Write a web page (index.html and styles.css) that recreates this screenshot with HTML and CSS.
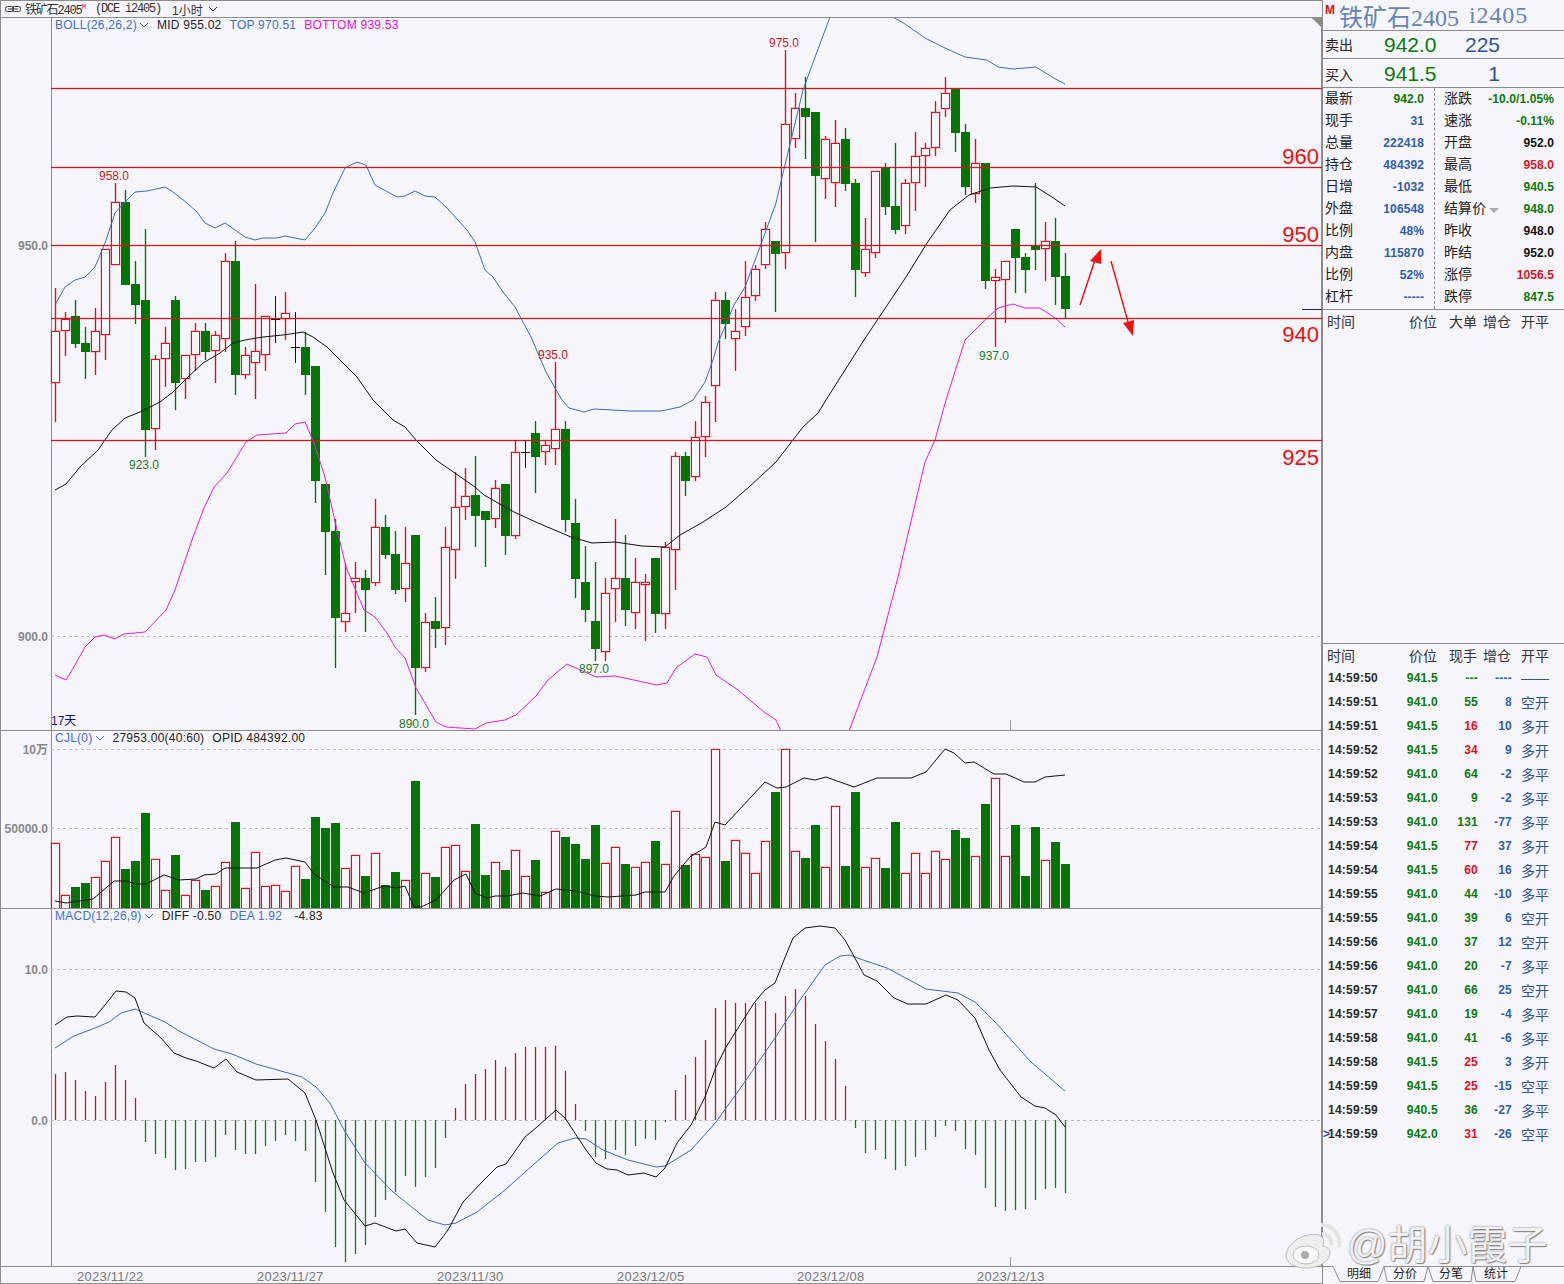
FILE: index.html
```html
<!DOCTYPE html>
<html lang="zh-CN">
<head>
  <meta charset="UTF-8" />
  <title>铁矿石2405</title>
  <link rel="stylesheet" href="styles.css">
</head>
<body>
  <div class="terminal">
    <div class="chart-col">
      <div class="title-bar">
        <svg class="link-icon" width="16" height="8" viewBox="0 0 16 8"><rect x="0.5" y="1.5" width="8" height="5" rx="2" /><rect x="7.5" y="1.5" width="8" height="5" rx="2" /><line x1="3" y1="4" x2="13" y2="4" /></svg>
        <span class="title-name">铁矿石2405<sup>M</sup></span>
        <span class="title-code">(DCE i2405)</span>
        <span class="title-period">1小时</span>
        <svg class="chev chev-black" width="10" height="6" viewBox="0 0 10 6"><polyline points="1,1 5,5 9,1" /></svg>
      </div>

      <div class="pane pane-main">
        <svg id="mainChart" width="1322" height="712" viewBox="0 18 1322 712"></svg>
        <div class="legend">
          <span class="blue">BOLL(26,26,2)<svg class="chev" width="10" height="6" viewBox="0 0 10 6"><polyline points="1,1 5,5 9,1" /></svg></span>
          <span>MID 955.02</span>
          <span class="blue">TOP 970.51</span>
          <span class="magenta">BOTTOM 939.53</span>
        </div>
      </div>

      <div class="pane pane-vol">
        <svg id="volChart" width="1322" height="177" viewBox="0 731 1322 177"></svg>
        <div class="legend">
          <span class="blue">CJL(0)<svg class="chev" width="10" height="6" viewBox="0 0 10 6"><polyline points="1,1 5,5 9,1" /></svg></span>
          <span>27953.00(40:60)</span>
          <span>OPID 484392.00</span>
        </div>
      </div>

      <div class="pane pane-macd">
        <svg id="macdChart" width="1322" height="357" viewBox="0 909 1322 357"></svg>
        <div class="legend">
          <span class="blue">MACD(12,26,9)<svg class="chev" width="10" height="6" viewBox="0 0 10 6"><polyline points="1,1 5,5 9,1" /></svg></span>
          <span>DIFF -0.50</span>
          <span class="blue">DEA 1.92</span>
          <span class="macd-val">-4.83</span>
        </div>
      </div>

      <div class="date-axis">
        <span>2023/11/22</span>
        <span>2023/11/27</span>
        <span>2023/11/30</span>
        <span>2023/12/05</span>
        <span>2023/12/08</span>
        <span>2023/12/13</span>
      </div>
    </div>

    <aside class="quote-panel">
      <div class="quote-title"><b>M</b><span>铁矿石2405</span><span class="quote-code">i2405</span></div>

      <div class="book-row book-sell"><label>卖出</label><span class="book-price">942.0</span><span class="book-size">225</span></div>
      <div class="book-row book-buy"><label>买入</label><span class="book-price">941.5</span><span class="book-size">1</span></div>

      <div class="details">
        <div class="detail-col">
          <div class="detail-row"><label>最新</label><span class="down">942.0</span></div>
          <div class="detail-row"><label>现手</label><span class="navy">31</span></div>
          <div class="detail-row"><label>总量</label><span class="navy">222418</span></div>
          <div class="detail-row"><label>持仓</label><span class="navy">484392</span></div>
          <div class="detail-row"><label>日增</label><span class="navy">-1032</span></div>
          <div class="detail-row"><label>外盘</label><span class="navy">106548</span></div>
          <div class="detail-row"><label>比例</label><span class="navy">48%</span></div>
          <div class="detail-row"><label>内盘</label><span class="navy">115870</span></div>
          <div class="detail-row"><label>比例</label><span class="navy">52%</span></div>
          <div class="detail-row"><label>杠杆</label><span class="navy">-----</span></div>
        </div>
        <div class="detail-col detail-right">
          <div class="detail-row"><label>涨跌</label><span class="down">-10.0/1.05%</span></div>
          <div class="detail-row"><label>速涨</label><span class="down">-0.11%</span></div>
          <div class="detail-row"><label>开盘</label><span class="ink">952.0</span></div>
          <div class="detail-row"><label>最高</label><span class="up">958.0</span></div>
          <div class="detail-row"><label>最低</label><span class="down">940.5</span></div>
          <div class="detail-row"><label>结算价<i class="caret"></i></label><span class="down">948.0</span></div>
          <div class="detail-row"><label>昨收</label><span class="ink">948.0</span></div>
          <div class="detail-row"><label>昨结</label><span class="ink">952.0</span></div>
          <div class="detail-row"><label>涨停</label><span class="up">1056.5</span></div>
          <div class="detail-row"><label>跌停</label><span class="down">847.5</span></div>
        </div>
      </div>

      <div class="trade-head"><span>时间</span><span>价位</span><span>大单</span><span>增仓</span><span>开平</span></div>
      <div class="big-orders"></div>

      <div class="trade-head"><span>时间</span><span>价位</span><span>现手</span><span>增仓</span><span>开平</span></div>
      <div class="trades">
        <div class="trade"><span>14:59:50</span><span class="down">941.5</span><span class="down">---</span><span class="navy">----</span><em>——</em></div>
        <div class="trade"><span>14:59:51</span><span class="down">941.0</span><span class="down">55</span><span class="navy">8</span><em>空开</em></div>
        <div class="trade"><span>14:59:51</span><span class="down">941.5</span><span class="up">16</span><span class="navy">10</span><em>多开</em></div>
        <div class="trade"><span>14:59:52</span><span class="down">941.5</span><span class="up">34</span><span class="navy">9</span><em>多开</em></div>
        <div class="trade"><span>14:59:52</span><span class="down">941.0</span><span class="down">64</span><span class="navy">-2</span><em>多平</em></div>
        <div class="trade"><span>14:59:53</span><span class="down">941.0</span><span class="down">9</span><span class="navy">-2</span><em>多平</em></div>
        <div class="trade"><span>14:59:53</span><span class="down">941.0</span><span class="down">131</span><span class="navy">-77</span><em>多平</em></div>
        <div class="trade"><span>14:59:54</span><span class="down">941.5</span><span class="up">77</span><span class="navy">37</span><em>多开</em></div>
        <div class="trade"><span>14:59:54</span><span class="down">941.5</span><span class="up">60</span><span class="navy">16</span><em>多开</em></div>
        <div class="trade"><span>14:59:55</span><span class="down">941.0</span><span class="down">44</span><span class="navy">-10</span><em>多平</em></div>
        <div class="trade"><span>14:59:55</span><span class="down">941.0</span><span class="down">39</span><span class="navy">6</span><em>空开</em></div>
        <div class="trade"><span>14:59:56</span><span class="down">941.0</span><span class="down">37</span><span class="navy">12</span><em>空开</em></div>
        <div class="trade"><span>14:59:56</span><span class="down">941.0</span><span class="down">20</span><span class="navy">-7</span><em>多平</em></div>
        <div class="trade"><span>14:59:57</span><span class="down">941.0</span><span class="down">66</span><span class="navy">25</span><em>空开</em></div>
        <div class="trade"><span>14:59:57</span><span class="down">941.0</span><span class="down">19</span><span class="navy">-4</span><em>多平</em></div>
        <div class="trade"><span>14:59:58</span><span class="down">941.0</span><span class="down">41</span><span class="navy">-6</span><em>多平</em></div>
        <div class="trade"><span>14:59:58</span><span class="down">941.5</span><span class="up">25</span><span class="navy">3</span><em>多开</em></div>
        <div class="trade"><span>14:59:59</span><span class="down">941.5</span><span class="up">25</span><span class="navy">-15</span><em>空平</em></div>
        <div class="trade"><span>14:59:59</span><span class="down">940.5</span><span class="down">36</span><span class="navy">-27</span><em>多平</em></div>
        <div class="trade trade-current"><span>14:59:59</span><span class="down">942.0</span><span class="up">31</span><span class="navy">-26</span><em>空平</em></div>
      </div>

      <svg class="tab-strip" width="242" height="18" viewBox="0 0 242 18">
        <polyline points="0,0.5 10,0.5 17,15.5 55,15.5 61,0.5 242,0.5" />
        <polyline points="61,0.5 64,15.5 101,15.5 105,0.5" />
        <polyline points="105,0.5 110,15.5 148,15.5 150,0.5" />
        <polyline points="150,0.5 153,15.5 192,15.5 198,0.5" />
        <text x="36" y="12">明细</text>
        <text x="82" y="12">分价</text>
        <text x="128" y="12">分笔</text>
        <text x="173" y="12">统计</text>
      </svg>
    </aside>

    <div class="watermark">
      <svg width="58" height="48" viewBox="0 0 58 48">
        <path class="wb-body" d="M23 14c-11 2-22 11-22 21 0 7 9 12 20 12 13 0 24-7 24-15 0-4-3-6-7-7 1-4 1-8-2-10-3-2-8-2-13-1z" />
        <ellipse class="wb-inner" cx="21" cy="34" rx="13" ry="9" />
        <circle class="wb-eye" cx="20" cy="34" r="4" />
        <path class="wb-arc" d="M36 4a18 18 0 0 1 18 22" />
        <path class="wb-arc" d="M37 13a9 9 0 0 1 9 11" />
      </svg>
      <span>@胡小霞子</span>
    </div>
  </div>

  <script src="chart.js"></script>
</body>
</html>
```

FILE: styles.css
```css
* {
  box-sizing: border-box;
}
html, body {
  margin: 0;
  padding: 0;
}
body {
  background-color: #f5f5fb;
  color: #222222;
  font-family: "Liberation Sans", "Noto Sans CJK SC", sans-serif;
  font-size: 12px;
}
.terminal {
  position: relative;
  display: flex;
  width: 1564px;
  height: 1284px;
  overflow: hidden;
}

/* left side: title + three chart panes */
.chart-col {
  width: 1322px;
  height: 1284px;
  flex: none;
}
.title-bar {
  display: flex;
  align-items: center;
  height: 18px;
  padding-left: 4px;
  border-top: 1px solid #8c8c8c;
  border-left: 1px solid #8c8c8c;
  border-bottom: 1px solid #8c8c8c;
  font-family: "Liberation Sans", "Noto Sans CJK SC", sans-serif;
  color: #333333;
}
.link-icon {
  fill: none;
  stroke: #333333;
  margin-right: 4px;
}
.title-name {
  font-family: "Liberation Mono", "Noto Sans CJK SC", monospace;
  font-size: 12px;
  letter-spacing: -1.2px;
  width: 70px;
  white-space: nowrap;
}
.title-name sup {
  color: #e04040;
  font-size: 8px;
  line-height: 0;
}
.title-code {
  font-family: "Liberation Mono", monospace;
  font-size: 12px;
  letter-spacing: -1.2px;
  width: 77px;
  white-space: nowrap;
}
.title-period {
  margin-right: 3px;
}
.chev {
  fill: none;
  stroke: #2f5fc0;
  margin-left: 2px;
}
.chev-black {
  stroke: #222222;
}
.pane {
  position: relative;
  border-bottom: 1px solid #8c8c8c;
}
.pane > svg {
  display: block;
}
.pane-main {
  height: 713px;
}
.pane-vol {
  height: 178px;
}
.pane-macd {
  height: 358px;
}
.legend {
  position: absolute;
  top: 0;
  left: 55px;
  display: flex;
  gap: 8px;
  height: 15px;
  line-height: 15px;
  white-space: nowrap;
  font-size: 12px;
  letter-spacing: 0.25px;
}
.legend .chev {
  position: relative;
  top: -1px;
}
.legend .macd-val {
  margin-left: 4px;
}
.blue {
  color: #3f6fd0;
}
.magenta {
  color: #e010e0;
}
.date-axis {
  display: flex;
  height: 17px;
  padding-left: 20px;
  border-left: 1px solid #8c8c8c;
  border-bottom: 1px solid #8c8c8c;
  color: #777777;
  font-size: 13px;
  letter-spacing: 0.25px;
  line-height: 19px;
}
.date-axis span {
  width: 180px;
  padding-left: 56px;
}

/* right side: quote panel */
.quote-panel {
  display: flex;
  flex-direction: column;
  width: 242px;
  height: 1284px;
  flex: none;
  border-left: 1px solid #8c8c8c;
}
.quote-title {
  display: flex;
  align-items: center;
  gap: 4px;
  height: 31px;
  padding-left: 2px;
  border-bottom: 1px solid #8c8c8c;
  font-family: "Liberation Serif", "Noto Sans CJK SC", serif;
  font-size: 24px;
  color: #6486b4;
  white-space: pre;
}
.quote-title b {
  align-self: flex-start;
  margin-top: 3px;
  font-family: "Liberation Sans", sans-serif;
  font-size: 12px;
  color: #e01010;
}
.quote-title .quote-code {
  margin-left: 6px;
  letter-spacing: 0.9px;
}
.book-row {
  display: flex;
  align-items: center;
  padding-left: 2px;
  border-bottom: 1px solid #8c8c8c;
  font-size: 21px;
}
.book-sell {
  height: 28px;
}
.book-sell label {
  position: relative;
  top: -1px;
}
.book-buy {
  height: 29px;
  padding-top: 2px;
}
.book-row label {
  width: 59px;
  font-size: 14px;
}
.book-price {
  width: 50px;
  color: #0a7a0a;
}
.book-size {
  width: 66px;
  text-align: right;
  color: #2f5596;
}
.details {
  display: flex;
  height: 222px;
  border-bottom: 1px solid #8c8c8c;
}
.detail-col {
  width: 111px;
  padding: 0 10px 0 2px;
}
.detail-right {
  width: 130px;
  padding-left: 9px;
  border-left: 1px dashed #8c8c8c;
}
.detail-row {
  display: flex;
  justify-content: space-between;
  align-items: center;
  height: 22px;
  font-weight: bold;
  letter-spacing: 0.1px;
}
.detail-row label {
  position: relative;
  top: -2px;
  font-size: 14px;
  font-weight: normal;
}
.caret {
  display: inline-block;
  margin-left: 3px;
  border-top: 5px solid #aaaaaa;
  border-left: 5px solid transparent;
  border-right: 5px solid transparent;
}
.up {
  color: #e01020;
}
.down {
  color: #0a7a0a;
}
.navy {
  color: #2f5fa8;
}
.ink {
  color: #111111;
}
.trade-head, .trade {
  display: grid;
  grid-template-columns: 70px 40px 40px 34px 38px;
  padding-left: 4px;
  align-items: center;
  text-align: right;
}
.trade-head {
  height: 22px;
  font-size: 14px;
  color: #333333;
}
.trade-head span:first-child, .trade span:first-child {
  text-align: left;
}
.big-orders {
  height: 312px;
  border-bottom: 1px solid #8c8c8c;
}
.trades {
  flex: 1;
}
.trade {
  position: relative;
  height: 24px;
  padding-left: 5px;
  grid-template-columns: 70px 40px 40px 34px 37px;
  font-weight: bold;
  letter-spacing: 0.25px;
}
.trade span:first-child {
  color: #2a2a2a;
}
.trade em {
  font-style: normal;
  font-weight: normal;
  font-size: 14px;
  letter-spacing: 0;
  color: #2f5596;
}
.trade-current::before {
  content: ">";
  position: absolute;
  left: 0;
  color: #2f5596;
}
.tab-strip {
  flex: none;
  fill: none;
}
.tab-strip polyline {
  stroke: #8c8c8c;
}
.tab-strip text {
  fill: #222222;
  stroke: none;
  font-size: 12px;
  text-anchor: middle;
}

/* repost mark lying over the corner */
.watermark {
  position: absolute;
  left: 1285px;
  top: 1221px;
  display: flex;
  align-items: center;
  gap: 4px;
  color: #f0f0f2;
  font-family: "Liberation Sans", "Noto Sans CJK SC", sans-serif;
  font-size: 40px;
  line-height: 48px;
  text-shadow: 0 0 2px #777777, 1px 1px 1px #888888;
  white-space: nowrap;
}
.wb-body {
  fill: #eeeeee;
  stroke: #bbbbbb;
}
.wb-inner {
  fill: #f8f8f8;
  stroke: #bbbbbb;
}
.wb-eye {
  fill: #aaaaaa;
}
.wb-arc {
  fill: none;
  stroke: #e4e4e4;
  stroke-width: 4;
}

/* chart pieces, drawn by chart.js */
.axis-line {
  stroke: #8c8c8c;
}
.grid-line {
  stroke: #bbbbbb;
  stroke-dasharray: 3 3;
}
.level-line {
  stroke: #cc1a1a;
}
.level-halo {
  stroke: #cc1a1a;
  stroke-opacity: 0.15;
  stroke-width: 3;
}
.axis-label {
  fill: #888888;
  font-weight: bold;
  font-size: 12px;
  text-anchor: end;
}
.price-tag {
  fill: #e81010;
  font-size: 22px;
  text-anchor: end;
}
.mark-red, .mark-green {
  font-size: 12px;
  text-anchor: middle;
}
.mark-red {
  fill: #d01818;
}
.mark-green {
  fill: #1a7a2a;
}
.days-label {
  fill: #101080;
  font-size: 12px;
}
.line-top, .line-dea {
  fill: none;
  stroke: #3a6cc0;
}
.line-mid, .line-diff, .line-vol {
  fill: none;
  stroke: #111111;
}
.line-bottom {
  fill: none;
  stroke: #e020d8;
}
.arrow-line {
  stroke: #f01010;
  stroke-width: 1.4;
}
.arrow-head {
  fill: #f01010;
}
.corner {
  fill: #8c8c8c;
}
```

FILE: chart.js
```javascript
const RED = '#dc1018';
const GREEN = '#067306';
const BG = '#f5f5fb';

// color, high, body top, body bottom, low (all in page px). i-th candle sits at x = 55 + 10 * i
const candles = [
  ['r',288,331,383,422],['r',312,319,331,356],['g',300,316,344,348],['g',327,343,352,379],['r',308,331,352,375],
  ['r',249,249,335,360],['r',183,202,265,265],['g',190,202,285,285],['g',261,284,305,324],['g',229,300,430,457],
  ['r',355,359,429,450],['r',327,343,359,387],['g',296,300,383,410],['r',355,355,379,399],['r',323,331,355,371],
  ['g',323,331,352,360],['r',331,335,351,383],['r',253,261,339,352],['g',241,261,375,395],['r',347,355,375,379],
  ['r',284,351,363,399],['r',316,316,355,371],['k',296,319,319,343],['r',292,313,319,340],['k',312,347,347,363],
  ['g',332,347,375,395],['g',366,366,481,503],['g',484,484,532,575],['g',519,531,618,668],['r',563,613,622,632],
  ['r',562,578,582,613],['g',570,578,590,632],['r',499,527,583,586],['g',515,527,555,559],['g',531,554,590,594],
  ['r',527,563,589,602],['g',535,535,668,715],['r',613,622,668,672],['g',597,621,629,648],['r',527,547,628,645],
  ['r',472,507,550,579],['r',468,496,507,520],['g',456,495,516,547],['g',511,511,520,567],['r',480,488,519,528],
  ['g',484,484,536,555],['r',440,452,536,539],['k',440,452,452,468],['g',421,433,457,493],['r',440,445,452,465],
  ['r',362,429,449,465],['g',421,429,520,532],['g',499,523,579,598],['g',546,582,610,622],['g',562,621,649,661],
  ['r',578,593,652,661],['r',519,578,589,622],['g',535,578,610,626],['r',558,582,613,629],['r',574,582,585,641],
  ['g',558,558,614,633],['r',542,547,614,629],['r',452,456,550,590],['g',452,456,481,496],['r',421,437,477,481],
  ['r',396,402,437,457],['r',292,300,386,422],['g',292,300,324,339],['r',309,331,339,371],['r',261,297,327,336],
  ['r',265,269,296,301],['r',222,229,265,269],['g',241,241,254,312],['r',50,124,253,269],['r',93,108,139,148],
  ['g',77,108,117,159],['g',112,112,176,242],['r',136,139,179,199],['r',120,143,183,207],['g',128,139,184,191],
  ['g',179,183,270,297],['r',218,249,273,277],['r',171,171,253,258],['g',163,168,207,215],['g',143,206,230,234],
  ['r',179,183,226,234],['r',132,156,183,211],['r',143,148,156,187],['r',101,112,148,156],['r',77,93,109,117],
  ['g',89,89,133,152],['g',124,132,187,195],['r',139,163,194,203],['g',163,163,281,289],['r',269,277,281,347],
  ['r',261,261,280,323],['g',229,229,258,293],['g',253,257,270,293],['g',183,246,250,270],['r',222,241,249,281],
  ['g',218,241,277,305],['g',253,276,309,319]
];

// volume bar tops, baseline is y = 908. bar color follows listing
const volumes = [
  ['r',843],['r',895],['g',887],['g',883],['r',877],['r',861],['r',837],['g',869],['g',861],['g',813],
  ['r',859],['r',890],['g',855],['r',895],['r',880],['g',890],['r',886],['r',862],['g',822],['r',888],
  ['r',852],['r',886],['r',885],['r',891],['r',866],['g',879],['g',817],['g',828],['g',823],['r',868],
  ['r',855],['g',876],['r',853],['g',885],['g',872],['r',880],['g',781],['r',873],['g',877],['r',847],
  ['r',845],['r',871],['g',824],['g',875],['r',862],['g',870],['r',850],['r',876],['g',860],['r',892],
  ['r',831],['g',837],['g',844],['g',859],['g',825],['r',863],['r',847],['g',864],['r',867],['r',862],
  ['g',841],['r',864],['r',811],['g',865],['r',854],['r',857],['r',749],['g',861],['r',840],['r',853],
  ['r',873],['r',841],['g',792],['r',749],['r',851],['g',858],['g',825],['r',867],['r',806],['g',866],
  ['g',792],['r',867],['r',858],['g',868],['g',822],['r',873],['r',853],['r',873],['r',851],['r',859],
  ['g',830],['g',838],['r',856],['g',804],['r',778],['r',856],['g',825],['g',876],['g',827],['r',860],
  ['g',842],['g',864]
];

// macd histogram ends, zero is y = 1120
const macdBars = [
  1074,1072,1080,1091,1096,1082,1065,1080,1098,1142,1154,1158,1170,1169,1162,1162,1157,1135,1150,1154,
  1154,1146,1141,1135,1141,1151,1182,1212,1247,1262,1254,1245,1217,1200,1192,1176,1187,1177,1168,1138,
  1108,1084,1074,1069,1060,1067,1053,1047,1047,1047,1046,1071,1104,1131,1157,1159,1150,1155,1146,1139,
  1140,1122,1090,1075,1057,1040,1008,1000,1003,1003,1003,1001,1013,996,989,996,1024,1041,1059,1086,
  1128,1153,1150,1159,1170,1166,1157,1150,1137,1126,1131,1149,1155,1188,1207,1211,1210,1209,1200,1189,
  1188,1193
];

const bollTop = '55,305 65,287 75,280 85,277 95,267 105,243 115,213 125,202 135,192 147,191 165,187 173,192 187,203 197,212 205,223 215,228 225,223 245,237 255,240 263,238 277,238 285,236 305,240 315,228 325,213 333,193 345,168 357,162 366,165 375,185 397,197 405,196 415,191 425,196 435,197 447,208 467,230 475,242 485,270 493,277 503,292 515,307 531,337 546,372 555,388 562,400 569,408 584,412 594,409 630,411 661,411 680,407 693,400 705,382 713,360 718,343 734,305 745,287 760,247 776,203 783,173 793,132 803,90 814,60 830,17 893,17 905,24 925,38 945,48 965,57 987,60 998,67 1013,69 1036,67 1052,77 1065,84';
const bollMid = '55,490 66,484 80,467 98,450 112,430 125,418 140,412 160,402 173,392 187,378 203,363 220,353 233,343 245,340 263,337 283,335 303,332 313,337 327,347 357,377 373,400 393,420 405,427 416,440 436,460 475,487 484,495 514,512 538,523 571,537 592,543 615,542 642,546 665,547 680,535 703,522 726,507 749,487 776,462 803,427 818,413 826,400 864,340 906,277 927,243 950,210 969,195 990,188 1013,186 1036,187 1052,197 1065,206';
const bollBottom = '55,675 66,680 75,665 85,647 95,637 104,635 115,639 124,634 145,632 166,610 175,590 193,537 204,508 214,487 227,473 246,442 257,435 286,433 295,424 305,422 314,443 325,477 334,517 346,567 364,610 375,617 387,633 395,647 405,658 416,688 436,722 446,727 475,729 486,723 505,720 516,715 536,696 548,680 567,664 596,677 615,676 657,685 667,683 676,668 695,654 707,657 716,675 738,690 764,712 776,720 781,731';
const bollBottom2 = '849,731 877,657 898,577 912,517 925,462 935,440 946,400 965,340 983,322 998,308 1013,304 1025,308 1040,308 1055,318 1065,327';
const volLine = '55,901 66,903 93,899 114,881 125,881 136,884 146,884 164,875 179,880 196,879 204,875 216,874 225,868 257,868 275,860 286,858 305,862 314,874 334,887 348,887 364,893 384,886 396,888 405,886 414,907 421,907 436,900 454,880 466,874 475,893 487,898 495,896 507,896 523,893 540,896 547,893 556,889 576,891 595,896 608,897 636,895 645,892 665,892 674,876 690,857 706,847 715,822 725,825 765,782 777,788 786,787 804,778 815,780 826,777 854,787 877,778 911,778 926,772 945,749 954,753 965,763 974,762 994,774 1006,774 1024,782 1035,782 1045,777 1065,775';
const diffLine = '55,1025 67,1017 77,1016 95,1017 105,1005 116,991 126,992 135,998 144,1023 161,1038 174,1053 186,1058 196,1061 214,1068 226,1059 237,1072 256,1080 288,1079 305,1093 316,1120 333,1173 344,1200 365,1226 375,1223 396,1231 405,1229 417,1243 435,1247 448,1230 463,1202 484,1180 497,1167 506,1164 525,1137 537,1127 556,1110 565,1118 586,1150 596,1163 607,1169 617,1170 628,1175 644,1173 656,1177 665,1168 677,1143 691,1125 705,1097 716,1067 726,1047 754,1003 765,990 775,983 784,960 793,938 805,928 820,926 835,928 845,940 856,960 864,975 877,981 894,998 908,1004 926,1004 946,995 958,1000 975,1018 989,1050 1000,1070 1021,1097 1035,1106 1045,1108 1056,1115 1065,1127';
const deaLine = '55,1048 74,1036 95,1028 109,1022 121,1013 135,1009 165,1022 179,1031 214,1049 232,1054 256,1064 281,1071 302,1077 316,1087 330,1103 344,1130 365,1163 393,1192 428,1220 445,1225 456,1223 477,1212 505,1190 533,1165 558,1143 575,1138 586,1139 603,1150 628,1160 656,1167 665,1166 691,1150 716,1122 744,1083 775,1038 800,1000 825,965 840,956 850,955 863,960 887,968 926,989 958,993 975,1002 996,1023 1031,1062 1065,1091';

function line(x1, y1, x2, y2, cls, color) {
  const attr = cls ? `class="${cls}"` : `stroke="${color}"`;
  return `<line x1="${x1}" y1="${y1}" x2="${x2}" y2="${y2}" ${attr} shape-rendering="crispEdges" />`;
}

// the source is a compressed screenshot, thin coloured strokes carry a pale fringe
function softLine(x1, y1, x2, y2, color, fringe) {
  return `<line x1="${x1}" y1="${y1}" x2="${x2}" y2="${y2}" stroke="${color}" stroke-width="3" stroke-opacity="${fringe}" shape-rendering="crispEdges" />` +
    line(x1, y1, x2, y2, null, color);
}

function outlineBar(x, top, bottom) {
  const attrs = `x="${x - 3.5}" y="${top + 0.5}" width="8" height="${bottom - top}" stroke="${RED}" shape-rendering="crispEdges"`;
  return `<rect ${attrs} fill="none" stroke-width="3" stroke-opacity="0.18" />` +
    `<rect ${attrs} fill="${BG}" />`;
}

function text(x, y, cls, value) {
  return `<text x="${x}" y="${y}" class="${cls}">${value}</text>`;
}

function poly(points, cls) {
  return `<polyline points="${points}" class="${cls}" />`;
}

function frame(top, bottom) {
  return line(0.5, top, 0.5, bottom, 'axis-line') + line(51.5, top, 51.5, bottom, 'axis-line') + line(1321.5, top, 1321.5, bottom, 'axis-line');
}

function drawCandle(c, i) {
  const x = 55 + 10 * i;
  const mid = x + 0.5;
  const [color, high, top, bottom, low] = c;
  if (color === 'k') {
    return line(mid, high, mid, low, null, '#111') + line(x - 4, top + 0.5, x + 5, top + 0.5, null, '#111');
  }
  if (color === 'g') {
    return softLine(mid, high, mid, low, GREEN, 0.18) +
      `<rect x="${x - 4}" y="${top}" width="9" height="${bottom - top}" fill="${GREEN}" shape-rendering="crispEdges" />`;
  }
  return softLine(mid, high, mid, low, RED, 0.18) + outlineBar(x, top, bottom - 1);
}

function drawVolume(v, i) {
  const x = 55 + 10 * i;
  const [color, top] = v;
  if (color === 'g') {
    return `<rect x="${x - 4}" y="${top}" width="9" height="${908 - top}" fill="${GREEN}" shape-rendering="crispEdges" />`;
  }
  return outlineBar(x, top, 908);
}

function drawMacdBar(y, i) {
  const mid = 55 + 10 * i + 0.5;
  return softLine(mid, 1120, mid, y, y < 1120 ? '#c01820' : '#108010', 0.14);
}

// main pane
let main = frame(18, 730);
main += line(51, 636.5, 1322, 636.5, 'grid-line');
main += candles.map(drawCandle).join('');
main += poly(bollTop, 'line-top') + poly(bollMid, 'line-mid') + poly(bollBottom, 'line-bottom') + poly(bollBottom2, 'line-bottom');
[88, 167, 245, 318, 440].forEach(y => {
  main += line(51, y + 0.5, 1322, y + 0.5, 'level-halo') + line(51, y + 0.5, 1322, y + 0.5, 'level-line');
});
main += line(1302, 309.5, 1322, 309.5, null, '#202070');
main += line(1010.5, 720, 1010.5, 730, null, '#999');
main += text(48, 250, 'axis-label', '950.0') + text(48, 641, 'axis-label', '900.0');
main += text(1319, 164, 'price-tag', '960') + text(1319, 242, 'price-tag', '950') + text(1319, 342, 'price-tag', '940') + text(1319, 465, 'price-tag', '925');
main += text(114, 180, 'mark-red', '958.0') + text(784, 47, 'mark-red', '975.0') + text(553, 359, 'mark-red', '935.0');
main += text(144, 469, 'mark-green', '923.0') + text(414, 728, 'mark-green', '890.0') + text(594, 673, 'mark-green', '897.0') + text(994, 360, 'mark-green', '937.0');
main += text(51, 725, 'days-label', '17天');
main += '<polygon class="corner" points="1312,18 1322,18 1322,28" />';
main += '<line class="arrow-line" x1="1080" y1="305" x2="1095" y2="260" /><polygon class="arrow-head" points="1101,249 1090,261 1101,264" />';
main += '<line class="arrow-line" x1="1111" y1="261" x2="1128" y2="322" /><polygon class="arrow-head" points="1133,336 1123,323 1134,320" />';
document.getElementById('mainChart').innerHTML = main;

// volume pane
let vol = frame(731, 908);
vol += line(51, 749.5, 1322, 749.5, 'grid-line') + line(51, 828.5, 1322, 828.5, 'grid-line');
vol += volumes.map(drawVolume).join('');
vol += poly(volLine, 'line-vol');
vol += text(48, 754, 'axis-label', '10万') + text(48, 833, 'axis-label', '50000.0');
document.getElementById('volChart').innerHTML = vol;

// macd pane
let macd = frame(909, 1266);
macd += line(51, 969.5, 1322, 969.5, 'grid-line') + line(51, 1120.5, 1322, 1120.5, 'grid-line');
macd += macdBars.map(drawMacdBar).join('');
macd += poly(deaLine, 'line-dea') + poly(diffLine, 'line-diff');
macd += line(1010.5, 1257, 1010.5, 1266, null, '#999');
macd += text(48, 974, 'axis-label', '10.0') + text(48, 1125, 'axis-label', '0.0');
document.getElementById('macdChart').innerHTML = macd;
```
